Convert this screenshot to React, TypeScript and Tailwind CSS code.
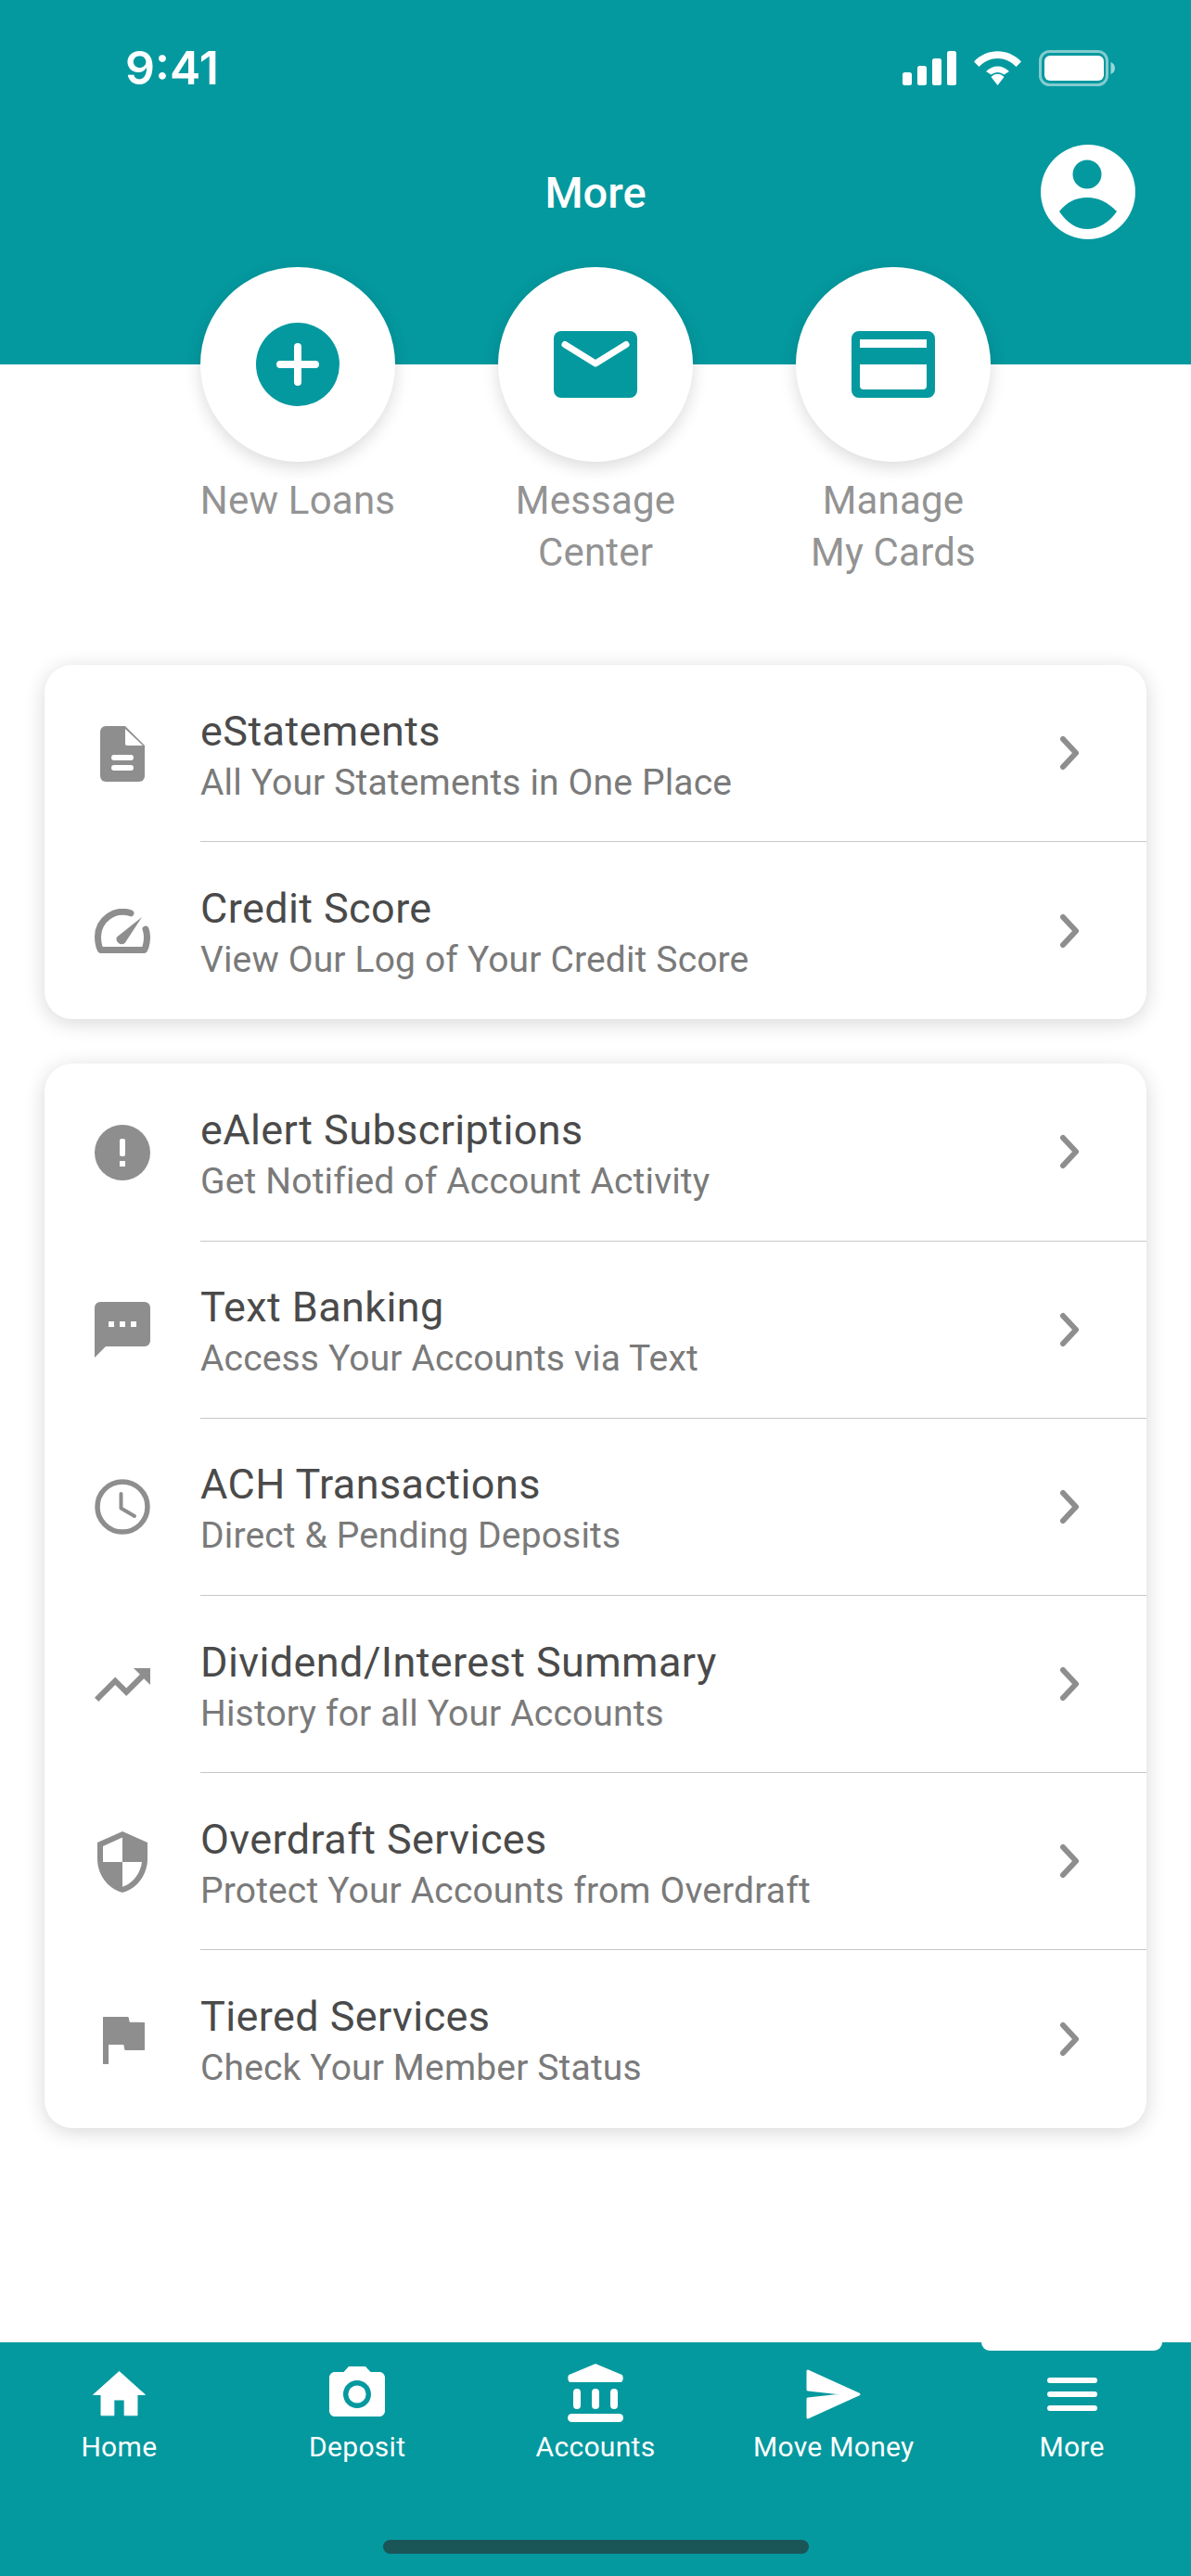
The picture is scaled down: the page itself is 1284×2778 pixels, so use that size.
const TEAL = "#04999f";

function Svg({ w, h, className, children }: { w: number; h: number; className?: string; children: React.ReactNode }) {
  return (
    <svg width={w} height={h} viewBox={`0 0 ${w} ${h}`} className={className}>
      {children}
    </svg>
  );
}

function M24({ size = 72, d, fill = "#8e8e8e", rounded = 0 }: { size?: number; d: string; fill?: string; rounded?: number }) {
  return (
    <svg width={size} height={size} viewBox="0 0 24 24">
      <path d={d} fill={fill} stroke={rounded ? fill : "none"} strokeWidth={rounded} strokeLinejoin="round" />
    </svg>
  );
}

const Doc = () => (
  <Svg w={48} h={60}>
    <path d="M6 0H27L48 21V54a6 6 0 0 1-6 6H6a6 6 0 0 1-6-6V6a6 6 0 0 1 6-6Z" fill="#8e8e8e" />
    <path d="M27 3 46 21H29a2 2 0 0 1-2-2Z" fill="#fff" />
    <rect x="12" y="31" width="24" height="6" rx="3" fill="#fff" />
    <rect x="12" y="42" width="24" height="6" rx="3" fill="#fff" />
  </Svg>
);

const Gauge = () => (
  <Svg w={60} h={48}>
    <path
      d="M39 4.800A27 27 0 0 0 3.500 30C3.500 36 4 40 6.500 44.500H53.500C56 40 56.500 36 56.500 30C56.500 27 56 24.500 55 22"
      fill="none"
      stroke="#8e8e8e"
      strokeWidth="7"
      strokeLinecap="round"
      strokeLinejoin="round"
    />
    <path d="M51 9 33 36.500a5.500 5.500 0 0 1-9-6Z" fill="#8e8e8e" />
  </Svg>
);

const Alert = () => (
  <Svg w={60} h={60}>
    <circle cx="30" cy="30" r="30" fill="#8e8e8e" />
    <rect x="27" y="15" width="6" height="19" rx="2" fill="#fff" />
    <rect x="27" y="39" width="6" height="6" fill="#fff" />
  </Svg>
);

const Bubble = () => (
  <Svg w={60} h={60}>
    <path d="M6 0H54a6 6 0 0 1 6 6V42a6 6 0 0 1-6 6H12L0 60V6a6 6 0 0 1 6-6Z" fill="#8e8e8e" />
    <rect x="15" y="21" width="6" height="6" fill="#fff" />
    <rect x="27" y="21" width="6" height="6" fill="#fff" />
    <rect x="39" y="21" width="6" height="6" fill="#fff" />
  </Svg>
);

const Clock = () => (
  <Svg w={60} h={60}>
    <circle cx="30" cy="30" r="27" fill="none" stroke="#8e8e8e" strokeWidth="5.500" />
    <path d="M28.500 16V31.500L43 40" fill="none" stroke="#8e8e8e" strokeWidth="4" strokeLinecap="round" strokeLinejoin="round" />
  </Svg>
);

const icons = {
  doc: <Doc />,
  gauge: <Gauge />,
  alert: <Alert />,
  bubble: <Bubble />,
  clock: <Clock />,
  trend: <M24 d="M16 6l2.290 2.290-4.880 4.880-4-4L2 16.590 3.410 18l6-6 4 4 6.300-6.290L22 12V6z" />,
  shield: <M24 d="M12 1L3 5v6c0 5.550 3.840 10.740 9 12 5.160-1.260 9-6.450 9-12V5l-9-4zm0 10.990h7c-.53 4.120-3.280 7.790-7 8.940V12H5V6.300l7-3.110v8.800z" />,
  flag: <M24 d="M14.400 6L14 4.200H5.200v16.600h1.600v-7h5.800l.4 2h6.800V6.200z" rounded={0.4} />,
};

function Row({ icon, title, sub, last }: { icon: keyof typeof icons; title: string; sub: string; last?: boolean }) {
  return (
    <div className="flex h-[191.2px] items-stretch">
      <div className="ml-[48px] flex w-[72px] shrink-0 items-center justify-center">{icons[icon]}</div>
      <div className={`ml-[48px] flex flex-1 items-center justify-between pr-[68px] ${last ? "" : "border-b border-[#c6c6c6]"}`}>
        <div className="flex flex-col pt-[9px]">
          <div className="text-[45px] leading-[54px] tracking-[0.4px] text-[#4a4a4a]">{title}</div>
          <div className="text-[39px] leading-[56px] tracking-[0.15px] text-[#7a7a7a]">{sub}</div>
        </div>
        <svg width="30" height="40" viewBox="0 0 30 40">
          <path d="M8 5 22 20 8 35" fill="none" stroke="#8e8e8e" strokeWidth="6" strokeLinecap="round" strokeLinejoin="round" />
        </svg>
      </div>
    </div>
  );
}

function Card({ children }: { children: React.ReactNode }) {
  return <div className="mx-[48px] rounded-[30px] bg-white shadow-[0_4px_22px_rgba(0,0,0,0.16)]">{children}</div>;
}

function Action({ icon, label }: { icon: React.ReactNode; label: React.ReactNode }) {
  return (
    <div className="flex w-[321px] flex-col items-center">
      <div className="flex h-[210px] w-[210px] items-center justify-center rounded-full bg-white shadow-[0_6px_18px_rgba(0,0,0,0.14)]">{icon}</div>
      <div className="mt-[14px] text-center text-[42px] leading-[56px] tracking-[0.2px] text-[#939393]">{label}</div>
    </div>
  );
}

function Tab({ icon, label, active }: { icon: React.ReactNode; label: string; active?: boolean }) {
  return (
    <div className="relative flex flex-1 flex-col items-center">
      {active && <div className="absolute left-[31px] top-0 h-[9px] w-[195px] rounded-b-[12px] bg-white" />}
      <div className="flex h-[90px] items-end justify-center">{icon}</div>
      <div className="mt-[4px] text-[30px] leading-[38px] tracking-[0.3px] text-white">{label}</div>
    </div>
  );
}

export default function App() {
  return (
    <div className="flex h-[2778px] w-[1284px] flex-col overflow-hidden bg-white font-['Roboto',sans-serif]">
      <header className="h-[393px] shrink-0 bg-[#04999f] text-white">
        <div className="flex h-[146px] items-center justify-between pl-[135px] pr-[82px]">
          <span className="font-['Inter',sans-serif] text-[50px] font-semibold">9:41</span>
          <div className="flex items-center">
            <Svg w={58} h={37}>
              <rect x="0" y="23" width="10" height="14" rx="2.500" fill="#fff" />
              <rect x="16" y="16" width="10" height="21" rx="2.500" fill="#fff" />
              <rect x="32" y="8" width="10" height="29" rx="2.500" fill="#fff" />
              <rect x="48" y="0" width="10" height="37" rx="2.500" fill="#fff" />
            </Svg>
            <Svg w={51} h={37} className="ml-[19px]">
              <path d="M0 11.500C14 -3.500 37 -3.500 51 11.500L45.500 17C34 5 17 5 5.500 17Z" fill="#fff" />
              <path d="M13 22C20 14.500 31 14.500 38 22L32.500 25.500C28 22 23 22 18.500 25.500Z" fill="#fff" />
              <path d="M18.500 28C22 23.500 29 23.500 32.500 28L25.500 37Z" fill="#fff" />
            </Svg>
            <Svg w={82} h={39} className="ml-[19px]">
              <rect x="1.500" y="1.500" width="72" height="36" rx="10" fill="none" stroke="#fff" strokeOpacity="0.5" strokeWidth="3" />
              <rect x="6" y="6" width="64" height="27" rx="6" fill="#fff" />
              <path d="M77.500 13C80 14 82 16 82 19.500S80 25 77.500 26Z" fill="#fff" fillOpacity="0.6" />
            </Svg>
          </div>
        </div>
        <div className="relative flex h-[122px] items-center justify-center">
          <span className="pt-[2px] text-[47px] font-medium">More</span>
          <svg width="102" height="102" viewBox="0 0 102 102" className="absolute right-[60px] top-[10px]">
            <circle cx="51" cy="51" r="51" fill="#fff" />
            <circle cx="50" cy="32" r="15.500" fill={TEAL} />
            <path d="M20 72C28 62 38 57 50 57S72 62 82 72C74 84 62 91 50 91S28 84 20 72Z" fill={TEAL} />
          </svg>
        </div>
      </header>

      <div className="-mt-[105px] flex justify-center">
        <Action
          label="New Loans"
          icon={
            <Svg w={90} h={90}>
              <circle cx="45" cy="45" r="45" fill={TEAL} />
              <path d="M45 26V64M26 45H64" stroke="#fff" strokeWidth="8" strokeLinecap="round" />
            </Svg>
          }
        />
        <Action
          label={
            <>
              Message
              <br />
              Center
            </>
          }
          icon={
            <Svg w={90} h={72}>
              <rect width="90" height="72" rx="8" fill={TEAL} />
              <path d="M12 14.500 45 35 78 14.500" fill="none" stroke="#fff" strokeWidth="7" strokeLinecap="round" strokeLinejoin="round" />
            </Svg>
          }
        />
        <Action
          label={
            <>
              Manage
              <br />
              My Cards
            </>
          }
          icon={
            <Svg w={90} h={72}>
              <path
                fillRule="evenodd"
                d="M8 0H82a8 8 0 0 1 8 8V64a8 8 0 0 1-8 8H8a8 8 0 0 1-8-8V8a8 8 0 0 1 8-8ZM9 9V18H81V9ZM9 36V59a4 4 0 0 0 4 4H77a4 4 0 0 0 4-4V36Z"
                fill={TEAL}
              />
            </Svg>
          }
        />
      </div>

      <div className="mt-[93px] flex flex-col gap-[48px]">
        <Card>
          <Row icon="doc" title="eStatements" sub="All Your Statements in One Place" />
          <Row icon="gauge" title="Credit Score" sub="View Our Log of Your Credit Score" last />
        </Card>
        <Card>
          <Row icon="alert" title="eAlert Subscriptions" sub="Get Notified of Account Activity" />
          <Row icon="bubble" title="Text Banking" sub="Access Your Accounts via Text" />
          <Row icon="clock" title="ACH Transactions" sub="Direct & Pending Deposits" />
          <Row icon="trend" title="Dividend/Interest Summary" sub="History for all Your Accounts" />
          <Row icon="shield" title="Overdraft Services" sub="Protect Your Accounts from Overdraft" />
          <Row icon="flag" title="Tiered Services" sub="Check Your Member Status" last />
        </Card>
      </div>

      <nav className="mt-auto flex h-[252px] shrink-0 flex-col bg-[#04999f]">
        <div className="flex flex-1">
          <Tab
            label="Home"
            icon={
              <svg width="67" height="67" viewBox="0 0 24 24">
                <path d="M10 20v-6h4v6h5v-8h3L12 3 2 12h3v8z" fill="#fff" stroke="#fff" strokeWidth="0.3" strokeLinejoin="round" />
              </svg>
            }
          />
          <Tab
            label="Deposit"
            icon={
              <svg width="72" height="72" viewBox="0 0 24 24" className="-mb-[2px]">
                <circle cx="12" cy="12" r="3.200" fill="#fff" />
                <path d="M9 2L7.170 4H4c-1.100 0-2 .9-2 2v12c0 1.100.9 2 2 2h16c1.100 0 2-.9 2-2V6c0-1.100-.9-2-2-2h-3.170L15 2H9zm3 15c-2.760 0-5-2.240-5-5s2.240-5 5-5 5 2.240 5 5-2.240 5-5 5z" fill="#fff" />
              </svg>
            }
          />
          <Tab
            label="Accounts"
            icon={
              <Svg w={60} h={63} className="mb-[4px]">
                <path d="M29 .6 1.500 12C-.5 13.500 0 20 3 20H57C60 20 60.500 13.500 58.500 12L31 .6C30.300 .2 29.700 .2 29 .6Z" fill="#fff" />
                <rect x="6" y="27" width="8" height="22" rx="4" fill="#fff" />
                <rect x="26" y="27" width="8" height="22" rx="4" fill="#fff" />
                <rect x="46" y="27" width="8" height="22" rx="4" fill="#fff" />
                <rect x="0" y="54" width="60" height="9" rx="4.500" fill="#fff" />
              </Svg>
            }
          />
          <Tab
            label="Move Money"
            icon={
              <Svg w={60} h={54} className="mb-[7px]">
                <path d="M2 2 57 27 2 52V32L47 27 2 22Z" fill="#fff" stroke="#fff" strokeWidth="3" strokeLinejoin="round" />
              </Svg>
            }
          />
          <Tab
            active
            label="More"
            icon={
              <Svg w={54} h={36} className="mb-[16px]">
                <rect width="54" height="6" y="0" rx="3" fill="#fff" />
                <rect width="54" height="6" y="15" rx="3" fill="#fff" />
                <rect width="54" height="6" y="30" rx="3" fill="#fff" />
              </Svg>
            }
          />
        </div>
        <div className="mb-[24px] h-[15px] w-[459px] self-center rounded-full bg-[#1a5558]" />
      </nav>
    </div>
  );
}
